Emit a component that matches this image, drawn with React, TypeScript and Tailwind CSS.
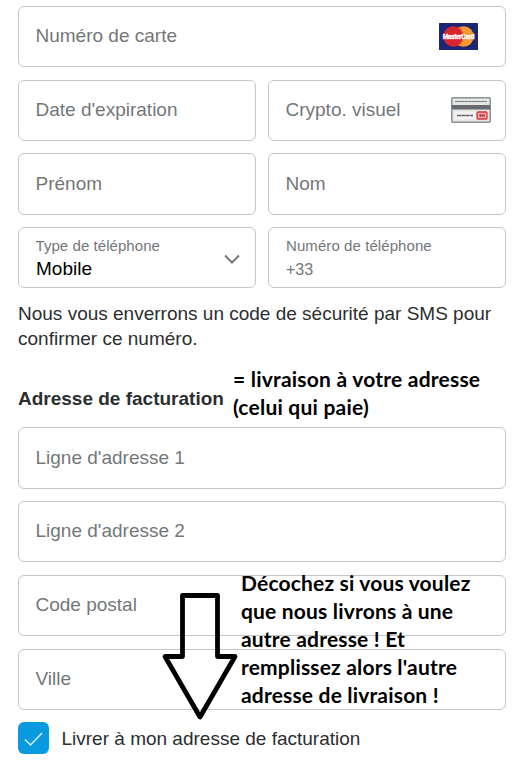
import type { ReactNode } from 'react';
import clsx from 'clsx';

interface FieldProps {
  label: string;
  className?: string;
  children?: ReactNode;
}

function Field({ label, className, children }: FieldProps) {
  return (
    <div
      className={clsx(
        'flex items-center justify-between rounded-md border border-[#c4c7c9] pl-[16.5px] text-[19px] text-[#73777a]',
        className ?? 'h-[61px]',
      )}
    >
      <span>{label}</span>
      {children}
    </div>
  );
}

function MasterCardIcon() {
  return (
    <svg width="39" height="27" viewBox="0 0 39 27" className="mr-[27px] overflow-visible">
      <rect width="39" height="27" rx="0.6" fill="#1c2674" />
      <circle cx="24.5" cy="13.5" r="10.3" fill="#f59a31" />
      <circle cx="14.5" cy="13.5" r="10.3" fill="#d8242f" />
      <path d="M19.5 5 a10.3 10.3 0 0 1 0 17" fill="none" stroke="#e9662e" strokeWidth="1" />
      <text x="19.5" y="15.9" fontSize="6.6" fontWeight="700" textAnchor="middle" fill="#fff" stroke="#fff" strokeWidth="0.3" className="font-['Liberation_Sans',sans-serif] tracking-[-0.5px]">
        MasterCard
      </text>
    </svg>
  );
}

function CvvIcon() {
  return (
    <svg width="40" height="26" viewBox="0 0 40 26" className="mr-[14.5px] mb-[1px]">
      <rect x="0.75" y="0.75" width="38.5" height="24.5" rx="1" fill="#e4e5e5" stroke="#8c9194" strokeWidth="1.5" />
      <path d="M4 4.5 H36" stroke="#777" strokeWidth="1.2" strokeDasharray="3 0.3" />
      <rect x="1" y="8" width="38" height="4.5" fill="#666a6c" />
      <rect x="3" y="14.5" width="22" height="8" fill="#f3f3f3" />
      <path d="M6 18.5 H22" stroke="#666" strokeWidth="1.5" strokeDasharray="4 0.3" />
      <rect x="26" y="15" width="10" height="7" rx="1" fill="#eba6a6" stroke="#d8383d" strokeWidth="1.3" />
      <path d="M28.5 18.5 H34" stroke="#8d2d30" strokeWidth="2" strokeDasharray="1.5 0.4" />
    </svg>
  );
}

export default function App() {
  return (
    <main className="relative h-[769px] w-[521px] overflow-hidden bg-white pt-[6px] pr-[15px] pl-[18px] font-['Liberation_Sans',Arial,sans-serif] text-[#2c2e2f]">
      <Field label="Numéro de carte">
        <MasterCardIcon />
      </Field>

      <div className="mt-[13px] grid grid-cols-2 gap-x-3">
        <Field label="Date d'expiration" />
        <Field label="Crypto. visuel">
          <CvvIcon />
        </Field>
      </div>

      <div className="mt-3 grid grid-cols-2 gap-x-3">
        <Field label="Prénom" className="h-[62px]" />
        <Field label="Nom" className="h-[62px]" />
      </div>

      {/* Phone */}
      <div className="mt-3 grid grid-cols-2 gap-x-3">
        <div className="flex h-[61px] items-center justify-between rounded-md border border-[#c4c7c9] pr-[15px] pl-[16.5px]">
          <div className="pt-[2px]">
            <div className="text-[15px] leading-[20px] tracking-[0.06px] text-[#73777a]">Type de téléphone</div>
            <div className="pl-[0.5px] text-[19px] leading-[25px] text-black">Mobile</div>
          </div>
          <svg width="16" height="10" viewBox="0 0 16 10" className="mt-[3px]" fill="none" stroke="#76797b" strokeWidth="2">
            <path d="M1 1.5 L8 8.5 L15 1.5" />
          </svg>
        </div>
        <div className="h-[61px] rounded-md border border-[#c4c7c9] pt-[8px] pl-[17px] text-[#73777a]">
          <div className="text-[15px] leading-[20px] tracking-[0.08px]">Numéro de téléphone</div>
          <div className="text-[16px] leading-[27px]">+33</div>
        </div>
      </div>

      <p className="mt-[13px] text-[19px] leading-[25px]">
        Nous vous enverrons un code de sécurité par SMS pour confirmer ce numéro.
      </p>

      <h2 className="mt-[36px] text-[19px] leading-[24px] font-bold">Adresse de facturation</h2>

      <Field label="Ligne d'adresse 1" className="mt-[16px] h-[62px]" />
      <Field label="Ligne d'adresse 2" className="mt-[12px] h-[61px]" />
      <Field label="Code postal" className="mt-[13px] h-[61px]" />
      <Field label="Ville" className="mt-[13px] h-[61px]" />

      <label className="mt-[12px] flex items-center gap-3">
        <span className="flex h-[32px] w-[31px] items-center justify-center rounded-md bg-[#0a9ae0]">
          <svg width="19" height="15" viewBox="0 0 19 15" className="mt-[2px]" fill="none" stroke="#d5f0fc" strokeWidth="1.5">
            <path d="M1 7.5 L6.5 13 L18 1" />
          </svg>
        </span>
        <span className="pt-[2px] pl-[0.5px] text-[19px] leading-[24px]">Livrer à mon adresse de facturation</span>
      </label>

      {/* Annotations laid over the form */}
      <div className="absolute top-[365px] left-[233px] font-['Lato',sans-serif] text-[21px] leading-[28px] font-bold tracking-[0.22px] whitespace-nowrap text-black">
        = livraison à votre adresse
        <br />
        (celui qui paie)
      </div>
      <div className="absolute top-[569px] left-[241px] font-['Lato',sans-serif] text-[21px] leading-[28px] font-bold tracking-[0.18px] whitespace-nowrap text-black">
        Décochez si vous voulez
        <br />
        que nous livrons à une
        <br />
        autre adresse ! Et
        <br />
        remplissez alors l'autre
        <br />
        adresse de livraison !
      </div>
      <svg className="absolute top-[590px] left-[160px]" width="80" height="132" viewBox="0 0 80 132">
        <path
          d="M22.5 5.5 H57.5 V66.5 H75 L40 127 L5 66.5 H22.5 Z"
          fill="none"
          stroke="#000"
          strokeWidth="4.8"
          strokeLinejoin="round"
        />
      </svg>
    </main>
  );
}
